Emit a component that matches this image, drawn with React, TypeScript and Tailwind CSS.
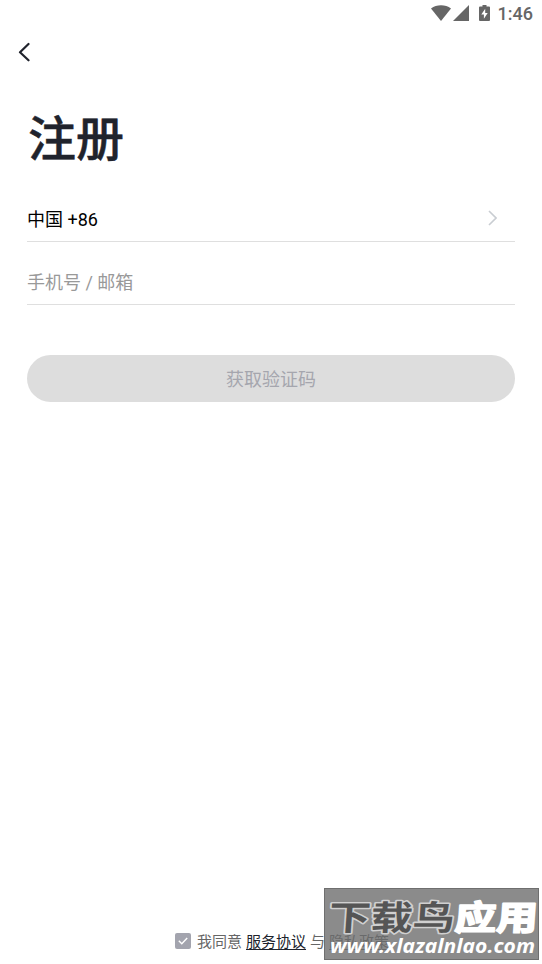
import React from 'react';

const StatusBar: React.FC = () => {
  return (
    <div className="flex h-7 items-center justify-end pr-[9px] text-[#666666]">
      <svg className="mb-0.5 h-[16px] w-[20px]" viewBox="0 0 20 16" fill="currentColor">
        <path d="M0 3.6C5.6-0.8 14.4-0.8 20 3.6L10 16Z" />
      </svg>
      <svg className="mb-0.5 ml-0.5 h-[16px] w-[16px]" viewBox="0 0 16 16" fill="currentColor">
        <path d="M16 0V16H0Z" />
      </svg>
      <svg className="mb-0.5 ml-2.5 h-4 w-[11px]" viewBox="0 0 11 16">
        <path
          d="M3.5 0h4v1.6H10q1 0 1 1V15q0 1-1 1H1q-1 0-1-1V2.6q0-1 1-1h2.5Z"
          fill="currentColor"
        />
        <path d="M6.2 3.8L2.3 9.6H4.9V13.8L8.7 8H6.2Z" fill="white" />
      </svg>
      <span className="ml-2 font-[Roboto] text-[18px] leading-7 font-medium">1:46</span>
    </div>
  );
};

const Watermark: React.FC = () => {
  return (
    <div className="absolute top-[888px] left-[324px] h-[72px] w-[215px] border border-[#6f6f6f] bg-[#777777]/85">
      <svg className="block h-full w-full" viewBox="325 889 213 70">
        <g
          fontFamily="'Noto Sans CJK SC', sans-serif"
          fontSize="34"
          fontWeight="700"
          strokeLinejoin="round"
          paintOrder="stroke"
        >
          <text
            transform="translate(328 930) skewX(-4)"
            textLength="126"
            lengthAdjust="spacingAndGlyphs"
            fill="#555555"
            stroke="#d0d0d0"
            strokeWidth="3"
          >
            下载鸟
          </text>
          <text
            transform="translate(454 930) skewX(-4)"
            textLength="83"
            lengthAdjust="spacingAndGlyphs"
            fill="white"
            stroke="white"
            strokeWidth="1.8"
          >
            应用
          </text>
        </g>
        <text
          x="330"
          y="953"
          textLength="205"
          lengthAdjust="spacingAndGlyphs"
          fill="white"
          fontFamily="'Noto Sans', sans-serif"
          fontSize="20"
          fontWeight="700"
          fontStyle="italic"
        >
          www.xlazalnlao.com
        </text>
      </svg>
    </div>
  );
};

const App: React.FC = () => {
  return (
    <div className="relative flex h-[964px] w-[542px] flex-col overflow-hidden bg-white font-[Roboto,'Noto_Sans_CJK_SC',sans-serif]">
      <StatusBar />
      <button className="mt-[14px] ml-[18px] w-3 text-[#20232c]">
        <svg
          className="block h-5 w-3"
          viewBox="0 0 12 20"
          fill="none"
          stroke="currentColor"
          strokeWidth="2.2"
          strokeLinecap="round"
          strokeLinejoin="round"
        >
          <path d="M10.5 2L2 10.3L10.5 18.3" />
        </svg>
      </button>

      <main className="mr-[27px] ml-[27px]">
        <h1 className="mt-[41px] h-[70px] pl-px text-[48px] leading-[74px] font-medium text-[#20232c] [-webkit-text-stroke:0.5px_#20232c]">
          注册
        </h1>
        <div className="mt-[22px] flex h-[47px] items-center justify-between border-b border-[#dfdfdf] pr-[18px] text-[18px] text-black">
          <span className="pt-0.5">中国 +86</span>
          <svg
            className="h-4 w-[9px]"
            viewBox="0 0 9 16"
            fill="none"
            stroke="#c9cdd2"
            strokeWidth="1.6"
          >
            <path d="M1 1L8 8L1 15" />
          </svg>
        </div>
        <div className="mt-[16px] flex h-[47px] items-center border-b border-[#dfdfdf] pt-0.5 text-[18px] text-[#999999]">
          手机号 / 邮箱
        </div>
        <button className="mt-[50px] block h-[47px] w-full rounded-full bg-[#dddddd] pt-0.5 text-[18px] text-[#a5a6ae]">
          获取验证码
        </button>
      </main>

      <footer className="mt-auto mb-[11px] ml-[175px] flex h-6 items-center text-[15px] text-[#666666]">
        <span className="mr-1.5 flex h-4 w-4 items-center justify-center rounded-[2px] bg-[#a3a4ae]">
          <svg className="h-2.5 w-2.5" viewBox="0 0 10 10" fill="none" stroke="white" strokeWidth="1.4">
            <path d="M0.8 4.8L3.8 7.8L9.2 2" />
          </svg>
        </span>
        <span className="pt-0.5">我同意</span>
        <a className="ml-1 pt-0.5 text-[#20232c] underline underline-offset-2">服务协议</a>
        <span className="mx-1 pt-0.5">与</span>
        <a className="pt-0.5 text-[#20232c] underline underline-offset-2">隐私政策</a>
      </footer>
      <Watermark />
    </div>
  );
};

export default App;
